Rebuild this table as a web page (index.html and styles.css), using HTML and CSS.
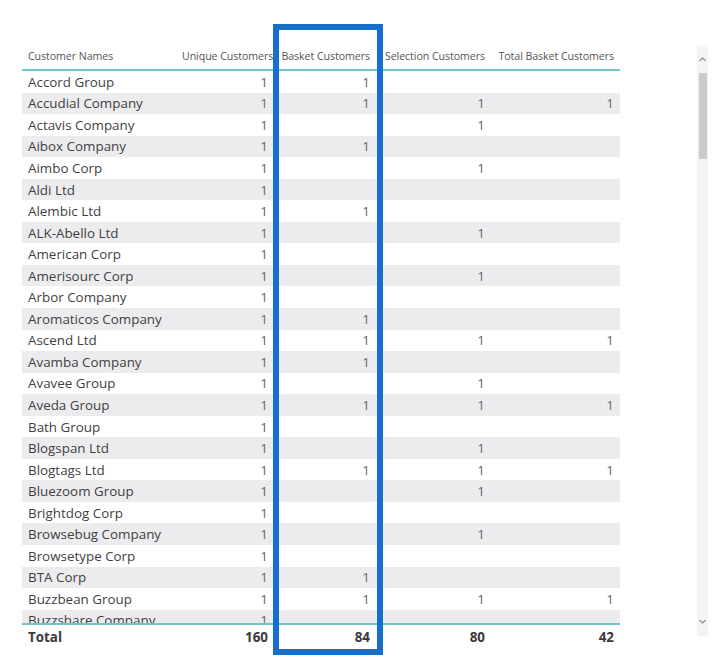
FILE: index.html
```html
<!DOCTYPE html>
<html>
<head>
<meta charset="utf-8">
<link rel="stylesheet" href="styles.css">
</head>
<body>
<div class="page">
  <div class="visual">
    <div class="table">
      <div class="row head">
        <div class="c name">Customer Names</div>
        <div class="c num">Unique Customers</div>
        <div class="c num">Basket Customers</div>
        <div class="c num">Selection Customers</div>
        <div class="c num">Total Basket Customers</div>
      </div>
      <div class="body">
        <div class="row"><div class="c name">Accord Group</div><div class="c num">1</div><div class="c num">1</div><div class="c num"></div><div class="c num"></div></div>
        <div class="row"><div class="c name">Accudial Company</div><div class="c num">1</div><div class="c num">1</div><div class="c num">1</div><div class="c num">1</div></div>
        <div class="row"><div class="c name">Actavis Company</div><div class="c num">1</div><div class="c num"></div><div class="c num">1</div><div class="c num"></div></div>
        <div class="row"><div class="c name">Aibox Company</div><div class="c num">1</div><div class="c num">1</div><div class="c num"></div><div class="c num"></div></div>
        <div class="row"><div class="c name">Aimbo Corp</div><div class="c num">1</div><div class="c num"></div><div class="c num">1</div><div class="c num"></div></div>
        <div class="row"><div class="c name">Aldi Ltd</div><div class="c num">1</div><div class="c num"></div><div class="c num"></div><div class="c num"></div></div>
        <div class="row"><div class="c name">Alembic Ltd</div><div class="c num">1</div><div class="c num">1</div><div class="c num"></div><div class="c num"></div></div>
        <div class="row"><div class="c name">ALK-Abello Ltd</div><div class="c num">1</div><div class="c num"></div><div class="c num">1</div><div class="c num"></div></div>
        <div class="row"><div class="c name">American Corp</div><div class="c num">1</div><div class="c num"></div><div class="c num"></div><div class="c num"></div></div>
        <div class="row"><div class="c name">Amerisourc Corp</div><div class="c num">1</div><div class="c num"></div><div class="c num">1</div><div class="c num"></div></div>
        <div class="row"><div class="c name">Arbor Company</div><div class="c num">1</div><div class="c num"></div><div class="c num"></div><div class="c num"></div></div>
        <div class="row"><div class="c name">Aromaticos Company</div><div class="c num">1</div><div class="c num">1</div><div class="c num"></div><div class="c num"></div></div>
        <div class="row"><div class="c name">Ascend Ltd</div><div class="c num">1</div><div class="c num">1</div><div class="c num">1</div><div class="c num">1</div></div>
        <div class="row"><div class="c name">Avamba Company</div><div class="c num">1</div><div class="c num">1</div><div class="c num"></div><div class="c num"></div></div>
        <div class="row"><div class="c name">Avavee Group</div><div class="c num">1</div><div class="c num"></div><div class="c num">1</div><div class="c num"></div></div>
        <div class="row"><div class="c name">Aveda Group</div><div class="c num">1</div><div class="c num">1</div><div class="c num">1</div><div class="c num">1</div></div>
        <div class="row"><div class="c name">Bath Group</div><div class="c num">1</div><div class="c num"></div><div class="c num"></div><div class="c num"></div></div>
        <div class="row"><div class="c name">Blogspan Ltd</div><div class="c num">1</div><div class="c num"></div><div class="c num">1</div><div class="c num"></div></div>
        <div class="row"><div class="c name">Blogtags Ltd</div><div class="c num">1</div><div class="c num">1</div><div class="c num">1</div><div class="c num">1</div></div>
        <div class="row"><div class="c name">Bluezoom Group</div><div class="c num">1</div><div class="c num"></div><div class="c num">1</div><div class="c num"></div></div>
        <div class="row"><div class="c name">Brightdog Corp</div><div class="c num">1</div><div class="c num"></div><div class="c num"></div><div class="c num"></div></div>
        <div class="row"><div class="c name">Browsebug Company</div><div class="c num">1</div><div class="c num"></div><div class="c num">1</div><div class="c num"></div></div>
        <div class="row"><div class="c name">Browsetype Corp</div><div class="c num">1</div><div class="c num"></div><div class="c num"></div><div class="c num"></div></div>
        <div class="row"><div class="c name">BTA Corp</div><div class="c num">1</div><div class="c num">1</div><div class="c num"></div><div class="c num"></div></div>
        <div class="row"><div class="c name">Buzzbean Group</div><div class="c num">1</div><div class="c num">1</div><div class="c num">1</div><div class="c num">1</div></div>
        <div class="row"><div class="c name">Buzzshare Company</div><div class="c num">1</div><div class="c num"></div><div class="c num"></div><div class="c num"></div></div>
      </div>
      <div class="row total">
        <div class="c name">Total</div>
        <div class="c num">160</div>
        <div class="c num">84</div>
        <div class="c num">80</div>
        <div class="c num">42</div>
      </div>
    </div>
    <div class="scrollbar">
      <div class="arrow">
        <svg width="9" height="6" viewBox="0 0 9 6"><polyline points="1.5,5 4.5,2 7.5,5" fill="none" stroke="#9a9a9a" stroke-width="1.4"/></svg>
      </div>
      <div class="thumb"></div>
      <div class="track"></div>
      <div class="arrow">
        <svg width="9" height="6" viewBox="0 0 9 6"><polyline points="1.5,1 4.5,4 7.5,1" fill="none" stroke="#9a9a9a" stroke-width="1.4"/></svg>
      </div>
    </div>
  </div>
  <div class="footer"></div>
  <div class="highlight"></div>
</div>
</body>
</html>
```

FILE: styles.css
```css
html, body {
  margin: 0;
  padding: 0;
  background: #ffffff;
}

.page {
  position: relative;
  width: 717px;
  height: 668px;
  overflow: hidden;
  font-family: "Open Sans", "Noto Sans", sans-serif;
  display: flex;
  flex-direction: column;
}

.visual {
  display: flex;
  align-items: flex-start;
  padding-top: 45px;
  height: 609px;
}

.table {
  margin-left: 22px;
  width: 598px;
  margin-top: 1px;
}

.row {
  display: grid;
  grid-template-columns: 160px 92px 102px 115px 129px;
  height: 21.55px;
  align-items: center;
}

.c {
  white-space: nowrap;
  overflow: hidden;
}

.name {
  padding-left: 6px;
}

.num {
  text-align: right;
  padding-right: 6px;
}

.head {
  height: 19px;
  border-bottom: 2px solid #6fc4c6;
  font-size: 10.6px;
  color: #555555;
  letter-spacing: -0.05px;
  padding-bottom: 4px;
}

.head .c {
  overflow: visible;
}

.body {
  height: 552px;
  overflow: hidden;
  font-size: 13.4px;
  color: #3f3f3f;
}

.body .row:nth-child(even) {
  background: #ececef;
}

.body .num {
  color: #666666;
}

.total {
  border-top: 2px solid #6fc4c6;
  height: 24px;
  font-size: 13.4px;
  font-weight: 700;
  color: #3a3a3a;
}

.scrollbar {
  margin-left: 77px;
  width: 11px;
  height: 591px;
  background: #f4f4f4;
  display: flex;
  flex-direction: column;
  align-items: center;
}

.arrow {
  height: 28px;
  width: 11px;
  display: flex;
  align-items: center;
  justify-content: center;
}

.thumb {
  width: 8px;
  height: 86px;
  background: #cbcbcb;
}

.track {
  flex: 1;
}

.footer {
  margin-top: 45px;
  height: 14px;
  background: linear-gradient(#f4f4f4, #e6e6e6);
}

.highlight {
  position: absolute;
  left: 273px;
  top: 24px;
  width: 110px;
  height: 631px;
  box-sizing: border-box;
  border: 6px solid #1670cb;
}
```
